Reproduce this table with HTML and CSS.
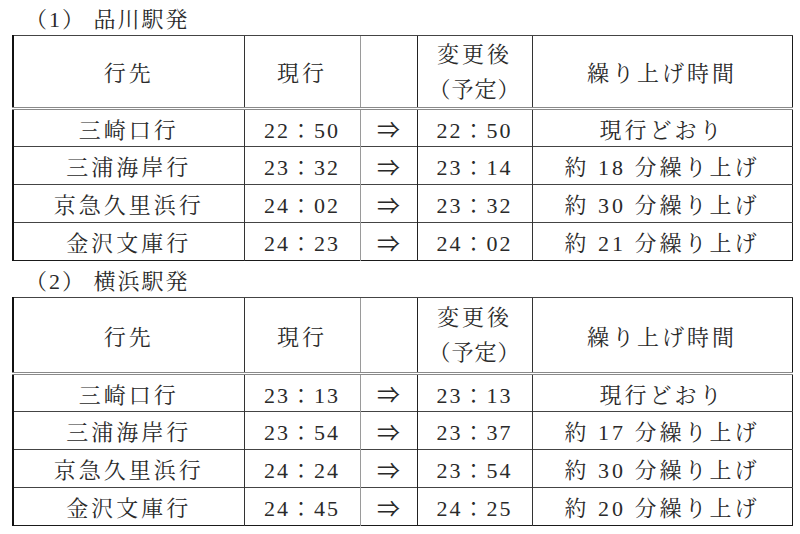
FILE: index.html
```html
<!DOCTYPE html>
<html lang="ja">
<head>
<meta charset="utf-8">
<link rel="stylesheet" href="styles.css">
</head>
<body>
<div class="page">
  <div class="title title-first">（1） 品川駅発</div>
  <table class="tt">
    <colgroup>
      <col class="c-dest"><col class="c-now"><col class="c-arrow"><col class="c-new"><col class="c-diff">
    </colgroup>
    <thead>
      <tr class="head head-a">
        <th>行先</th>
        <th>現行</th>
        <th class="arrow"></th>
        <th class="two"><span class="ln">変更後</span><span class="ln paren">（予定）</span></th>
        <th>繰り上げ時間</th>
      </tr>
    </thead>
    <tbody>
      <tr><td>三崎口行</td><td class="time">22：50</td><td class="arrow">⇒</td><td class="time">22：50</td><td>現行どおり</td></tr>
      <tr><td>三浦海岸行</td><td class="time">23：32</td><td class="arrow">⇒</td><td class="time">23：14</td><td>約 18 分繰り上げ</td></tr>
      <tr><td>京急久里浜行</td><td class="time">24：02</td><td class="arrow">⇒</td><td class="time">23：32</td><td>約 30 分繰り上げ</td></tr>
      <tr><td>金沢文庫行</td><td class="time">24：23</td><td class="arrow">⇒</td><td class="time">24：02</td><td>約 21 分繰り上げ</td></tr>
    </tbody>
  </table>
  <div class="title title-second">（2） 横浜駅発</div>
  <table class="tt">
    <colgroup>
      <col class="c-dest"><col class="c-now"><col class="c-arrow"><col class="c-new"><col class="c-diff">
    </colgroup>
    <thead>
      <tr class="head head-b">
        <th>行先</th>
        <th>現行</th>
        <th class="arrow"></th>
        <th class="two"><span class="ln">変更後</span><span class="ln paren">（予定）</span></th>
        <th>繰り上げ時間</th>
      </tr>
    </thead>
    <tbody class="body-b">
      <tr><td>三崎口行</td><td class="time">23：13</td><td class="arrow">⇒</td><td class="time">23：13</td><td>現行どおり</td></tr>
      <tr><td>三浦海岸行</td><td class="time">23：54</td><td class="arrow">⇒</td><td class="time">23：37</td><td>約 17 分繰り上げ</td></tr>
      <tr><td>京急久里浜行</td><td class="time">24：24</td><td class="arrow">⇒</td><td class="time">23：54</td><td>約 30 分繰り上げ</td></tr>
      <tr><td>金沢文庫行</td><td class="time">24：45</td><td class="arrow">⇒</td><td class="time">24：25</td><td>約 20 分繰り上げ</td></tr>
    </tbody>
  </table>
</div>
</body>
</html>
```

FILE: styles.css
```css
html, body {
  margin: 0;
  padding: 0;
  background: #ffffff;
}

body {
  font-family: "Liberation Serif", "Noto Serif CJK JP", "Noto Sans CJK JP", serif;
  color: #2a2a2a;
  font-size: 22px;
}

.page {
  padding: 0 9px 0 12px;
}

.title {
  display: flex;
  align-items: center;
  padding-left: 13px;
  letter-spacing: 2px;
  font-weight: normal;
}

.title-first {
  height: 35px;
}

.title-second {
  height: 36px;
}

.tt {
  width: 779px;
  border-collapse: collapse;
  table-layout: fixed;
  border: 1px solid #1a1a1a;
  border-left: 2px solid #111;
}

.c-dest { width: 231px; }
.c-now { width: 116px; }
.c-arrow { width: 57px; }
.c-new { width: 115px; }
.c-diff { width: 260px; }

.tt th,
.tt td {
  padding: 0;
  text-align: center;
  vertical-align: middle;
  font-weight: normal;
  letter-spacing: 3px;
  border-left: 1px solid #333;
  border-top: 1px solid #444;
  white-space: nowrap;
}

.tt th.arrow,
.tt td.arrow {
  border-left: 1px solid #9a9a9a;
  font-family: "Noto Sans CJK JP", "DejaVu Sans", sans-serif;
  font-size: 23px;
  letter-spacing: 0;
}

.tt td.arrow + td,
.tt th.arrow + th {
  border-left: 1px solid #222;
}

.tt td.time {
  letter-spacing: 2px;
}

.head th {
  border-bottom: 3px double #8a8a8a;
}

.head-a {
  height: 73px;
}

.head-b {
  height: 76px;
}

.tt tbody tr {
  height: 38px;
}

.body-b tr {
  height: 37.5px;
}

.two {
  line-height: 35px;
}

.two .ln {
  display: block;
}

.two .paren {
  letter-spacing: 1px;
}
```
